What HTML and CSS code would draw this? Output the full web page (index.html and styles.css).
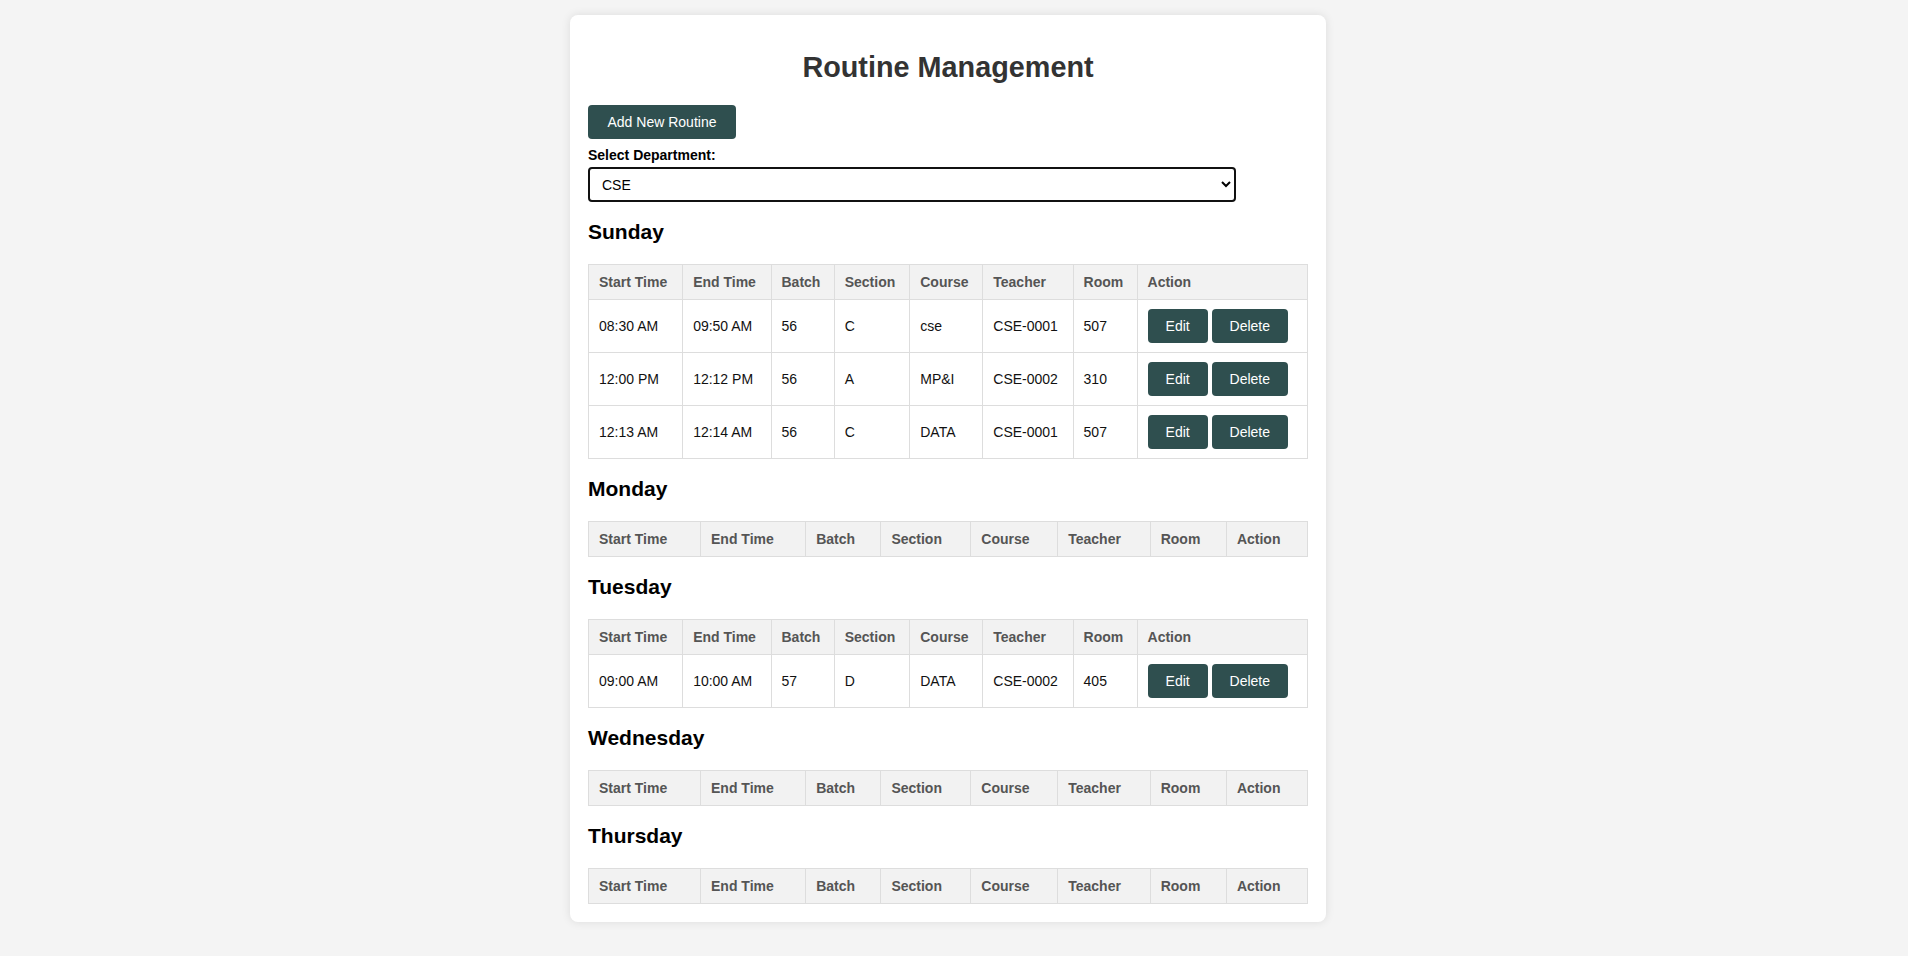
FILE: index.html
```html
<!DOCTYPE html>
<html lang="en">
<head>
<meta charset="utf-8">
<title>Routine Management</title>
<link rel="stylesheet" href="styles.css">
</head>
<body>
<div class="container">
  <h1 class="title">Routine Management</h1>
  <button class="btn btn-add">Add New Routine</button>
  <label class="field-label" for="dept">Select Department:</label>
  <select id="dept" class="dept-select">
    <option>CSE</option>
    <option>EEE</option>
    <option>BBA</option>
  </select>

  <h3 class="day">Sunday</h3>
  <table class="routine">
    <thead>
      <tr><th>Start Time</th><th>End Time</th><th>Batch</th><th>Section</th><th>Course</th><th>Teacher</th><th>Room</th><th>Action</th></tr>
    </thead>
    <tbody>
      <tr><td>08:30 AM</td><td>09:50 AM</td><td>56</td><td>C</td><td>cse</td><td>CSE-0001</td><td>507</td><td><button class="btn">Edit</button> <button class="btn">Delete</button></td></tr>
      <tr><td>12:00 PM</td><td>12:12 PM</td><td>56</td><td>A</td><td>MP&amp;I</td><td>CSE-0002</td><td>310</td><td><button class="btn">Edit</button> <button class="btn">Delete</button></td></tr>
      <tr><td>12:13 AM</td><td>12:14 AM</td><td>56</td><td>C</td><td>DATA</td><td>CSE-0001</td><td>507</td><td><button class="btn">Edit</button> <button class="btn">Delete</button></td></tr>
    </tbody>
  </table>

  <h3 class="day">Monday</h3>
  <table class="routine">
    <thead>
      <tr><th>Start Time</th><th>End Time</th><th>Batch</th><th>Section</th><th>Course</th><th>Teacher</th><th>Room</th><th>Action</th></tr>
    </thead>
    <tbody></tbody>
  </table>

  <h3 class="day">Tuesday</h3>
  <table class="routine">
    <thead>
      <tr><th>Start Time</th><th>End Time</th><th>Batch</th><th>Section</th><th>Course</th><th>Teacher</th><th>Room</th><th>Action</th></tr>
    </thead>
    <tbody>
      <tr><td>09:00 AM</td><td>10:00 AM</td><td>57</td><td>D</td><td>DATA</td><td>CSE-0002</td><td>405</td><td><button class="btn">Edit</button> <button class="btn">Delete</button></td></tr>
    </tbody>
  </table>

  <h3 class="day">Wednesday</h3>
  <table class="routine">
    <thead>
      <tr><th>Start Time</th><th>End Time</th><th>Batch</th><th>Section</th><th>Course</th><th>Teacher</th><th>Room</th><th>Action</th></tr>
    </thead>
    <tbody></tbody>
  </table>

  <h3 class="day">Thursday</h3>
  <table class="routine">
    <thead>
      <tr><th>Start Time</th><th>End Time</th><th>Batch</th><th>Section</th><th>Course</th><th>Teacher</th><th>Room</th><th>Action</th></tr>
    </thead>
    <tbody></tbody>
  </table>
</div>
</body>
</html>
```

FILE: styles.css
```css
* {
  box-sizing: border-box;
}

html, body {
  margin: 0;
}

body {
  background: #f4f4f4;
  font-family: "Liberation Sans", Arial, sans-serif;
  font-size: 14px;
  color: #000;
  padding: 15px 12px 34px 0;
}

.container {
  width: 756px;
  margin: 0 auto;
  padding: 18px;
  background: #fff;
  border-radius: 8px;
  box-shadow: 0 0 10px rgba(0, 0, 0, 0.1);
}

.title {
  font-size: 28.8px;
  font-weight: bold;
  color: #333;
  text-align: center;
  margin: 18px 0 21px;
}

.btn {
  background: #2f4f4f;
  color: #fff;
  border: none;
  border-radius: 4px;
  padding: 9px 18px;
  font-family: "Liberation Sans", Arial, sans-serif;
  font-size: 14px;
  line-height: 16px;
  cursor: pointer;
  margin: 0;
}

.btn-add {
  display: block;
  padding: 9px 19.5px;
  margin-bottom: 8px;
}

.field-label {
  display: block;
  font-weight: bold;
  line-height: 16px;
  margin: 0 0 4px;
}

.dept-select {
  display: block;
  width: 90%;
  height: 35px;
  padding: 0 8px;
  margin: 0;
  border: 2px solid #111;
  border-radius: 4px;
  background: #fff;
  color: #000;
  font-family: "Liberation Sans", Arial, sans-serif;
  font-size: 14px;
}

.day {
  font-size: 21px;
  font-weight: bold;
  line-height: 24px;
  margin: 18px 0 20px;
}

.routine {
  width: 100%;
  border-collapse: collapse;
}

.routine th,
.routine td {
  border: 1px solid #ddd;
  padding: 9px 10px;
  text-align: left;
  line-height: 16px;
}

.routine th {
  background: #f2f2f2;
  color: #555;
  font-weight: bold;
}

.routine td {
  color: #111;
}
```
